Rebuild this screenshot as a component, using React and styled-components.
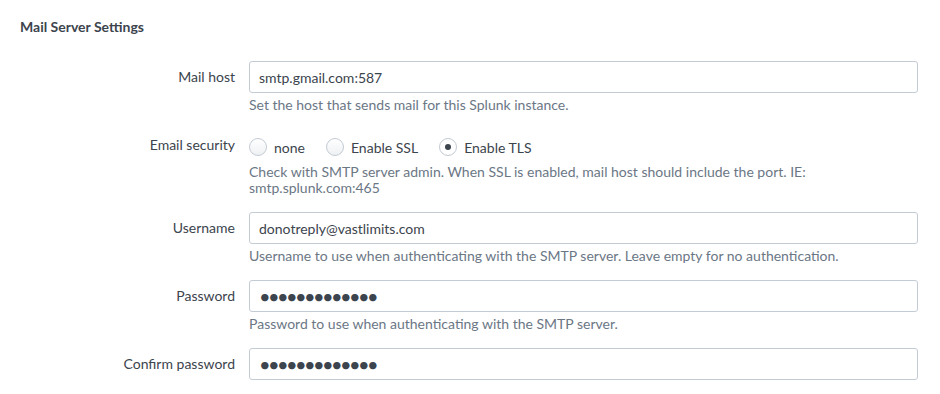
import styled, { createGlobalStyle } from 'styled-components';

const GlobalStyle = createGlobalStyle`
  body {
    margin: 0;
    background: #ffffff;
    font-family: Lato, 'Liberation Sans', sans-serif;
    color: #3c444d;
  }
`;

const fields = [
  {
    label: 'Username',
    value: 'donotreply@vastlimits.com',
    help: 'Username to use when authenticating with the SMTP server. Leave empty for no authentication.',
  },
  {
    label: 'Password',
    value: 'abcdefghijklm',
    type: 'password',
    help: 'Password to use when authenticating with the SMTP server.',
  },
  { label: 'Confirm password', value: 'abcdefghijklm', type: 'password' },
];

const security = ['none', 'Enable SSL', 'Enable TLS'];

export default function App() {
  return (
    <>
      <GlobalStyle />
      <Page>
        <Title>Mail Server Settings</Title>
        <Form>
          <Row>
            <Label>Mail host</Label>
            <Control>
              <TextInput type="text" defaultValue="smtp.gmail.com:587" />
              <Help>Set the host that sends mail for this Splunk instance.</Help>
            </Control>
          </Row>
          <Row>
            <Label>Email security</Label>
            <Control>
              <RadioGroup>
                {security.map((opt) => (
                  <RadioOption key={opt}>
                    <Radio $checked={opt === 'Enable TLS'} />
                    <span>{opt}</span>
                  </RadioOption>
                ))}
              </RadioGroup>
              <Help $tight>
                Check with SMTP server admin. When SSL is enabled, mail host should include the port. IE:
                <br />
                smtp.splunk.com:465
              </Help>
            </Control>
          </Row>
          {fields.map((f) => (
            <Row key={f.label}>
              <Label>{f.label}</Label>
              <Control>
                <TextInput
                  type={f.type || 'text'}
                  defaultValue={f.value}
                  $password={f.type === 'password'}
                />
                {f.help && <Help>{f.help}</Help>}
              </Control>
            </Row>
          ))}
        </Form>
      </Page>
    </>
  );
}

const Page = styled.div`
  width: 940px;
  height: 394px;
  padding: 18px 22px 0 20px;
  box-sizing: border-box;
  overflow: hidden;
`;

const Title = styled.h2`
  margin: 0;
  font-size: 14px;
  line-height: 17px;
  font-weight: 700;
  color: #3c444d;
`;

const Form = styled.div`
  margin-top: 26px;
  display: flex;
  flex-direction: column;
  gap: 16px;
`;

const Row = styled.div`
  display: grid;
  grid-template-columns: 215px 1fr;
  column-gap: 14px;
`;

const Label = styled.div`
  text-align: right;
  font-size: 14px;
  line-height: 32px;
  color: #3c444d;
`;

const Control = styled.div`
  display: flex;
  flex-direction: column;
`;

const TextInput = styled.input`
  box-sizing: border-box;
  height: 32px;
  width: 100%;
  padding: 0 9px;
  border: 1px solid #c3cbd4;
  border-radius: 3px;
  background: #ffffff;
  font-family: Lato, 'Liberation Sans', sans-serif;
  font-size: ${(p) => (p.$password ? '20px' : '14px')};
  letter-spacing: ${(p) => (p.$password ? '-2.6px' : '0')};
  color: #3c444d;
  outline: none;
`;

const Help = styled.div`
  margin-top: ${(p) => (p.$tight ? '2px' : '4px')};
  font-size: 14px;
  line-height: 16px;
  color: #6b7785;
`;

const RadioGroup = styled.div`
  display: flex;
  align-items: center;
  gap: 21px;
  height: 28px;
  margin-top: 4px;
  margin-bottom: 1px;
`;

const RadioOption = styled.label`
  display: flex;
  align-items: center;
  gap: 7px;
  font-size: 14px;
  color: #3c444d;
`;

const Radio = styled.span`
  box-sizing: border-box;
  width: 18px;
  height: 18px;
  border-radius: 50%;
  border: 1px solid #c3cbd4;
  background: ${(p) => (p.$checked ? '#ffffff' : 'linear-gradient(#ffffff, #eef1f3)')};
  display: flex;
  align-items: center;
  justify-content: center;

  &::after {
    content: '';
    display: ${(p) => (p.$checked ? 'block' : 'none')};
    width: 6px;
    height: 6px;
    border-radius: 50%;
    background: #3c444d;
  }
`;
